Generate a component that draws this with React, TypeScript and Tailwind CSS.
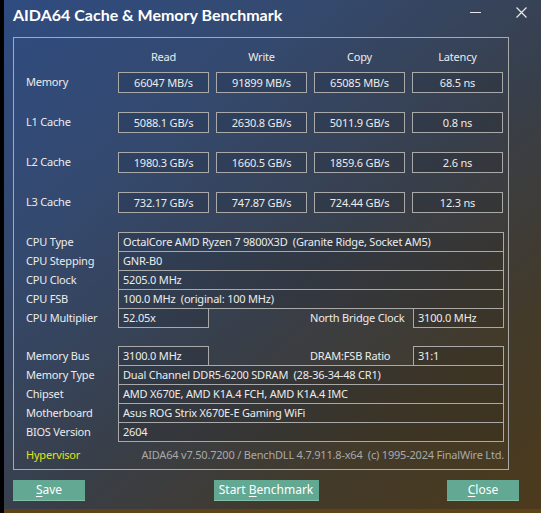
import React from "react";

const font = { fontFamily: '"Noto Sans", "Liberation Sans", sans-serif' };
const titleFont = { fontFamily: 'Lato, "Noto Sans", sans-serif' };

const results = [
  { label: "Memory", values: ["66047 MB/s", "91899 MB/s", "65085 MB/s", "68.5 ns"] },
  { label: "L1 Cache", values: ["5088.1 GB/s", "2630.8 GB/s", "5011.9 GB/s", "0.8 ns"] },
  { label: "L2 Cache", values: ["1980.3 GB/s", "1660.5 GB/s", "1859.6 GB/s", "2.6 ns"] },
  { label: "L3 Cache", values: ["732.17 GB/s", "747.87 GB/s", "724.44 GB/s", "12.3 ns"] },
];

const box = "border border-[#a9a9a9] bg-black/10 pl-[4px] leading-[18px] whitespace-pre";

function WideRow({ label, value, first }: { label: string; value: string; first?: boolean }) {
  return (
    <div className={`flex h-[20px] ${first ? "" : "-mt-px"}`}>
      <div className="w-[104px] pl-[12px] leading-[20px]">{label}</div>
      <div className={`w-[386px] ${box}`}>{value}</div>
    </div>
  );
}

function SplitRow({ label, value, label2, value2, first }: { label: string; value: string; label2: string; value2: string; first?: boolean }) {
  return (
    <div className={`flex h-[20px] ${first ? "" : "-mt-px"}`}>
      <div className="w-[104px] pl-[12px] leading-[20px]">{label}</div>
      <div className={`w-[91px] ${box}`}>{value}</div>
      <div className="w-[204px] pl-[101px] leading-[20px]">{label2}</div>
      <div className={`w-[91px] ${box}`}>{value2}</div>
    </div>
  );
}

export default function App() {
  return (
    <div
      className="relative flex h-[513px] w-[541px] flex-col overflow-hidden border-l-4 border-black bg-[linear-gradient(140deg,#2f4c80_0%,#34496e_28%,#383f4a_55%,#433a2a_78%,#4c3a1c_100%)] text-[11px] tracking-[-0.2px] text-[#ececec]"
      style={font}
    >
      {/* Title bar */}
      <div className="flex h-[37px] items-start">
        <div className="pl-[9px] pt-[4px] text-[16px] font-bold leading-[22px] tracking-normal text-white" style={titleFont}>
          AIDA64 Cache &amp; Memory Benchmark
        </div>
        <div className="ml-auto flex items-start">
          <svg className="mt-[12px] mr-[35px]" width="11" height="2" viewBox="0 0 11 2">
            <rect x="0" y="0" width="11" height="1" fill="#e8e8e8" />
          </svg>
          <svg className="mt-[7px] mr-[14px]" width="11" height="11" viewBox="0 0 11 11">
            <path d="M0.5 0.5 L10.5 10.5 M10.5 0.5 L0.5 10.5" stroke="#e8e8e8" strokeWidth="1.2" />
          </svg>
        </div>
      </div>

      {/* Panel */}
      <div className="ml-[9px] w-[496px] border border-[#a9a9a9] pt-[10px]">
        <div className="flex h-[18px] items-center">
          <div className="w-[104px]" />
          <div className="grid grid-cols-[91px_91px_91px_91px] gap-x-[7px] text-center">
            <div>Read</div>
            <div>Write</div>
            <div>Copy</div>
            <div>Latency</div>
          </div>
        </div>
        <div className="mt-[6px] flex flex-col gap-[19px]">
          {results.map((r) => (
            <div key={r.label} className="flex h-[21px] items-center">
              <div className="w-[104px] pl-[12px]">{r.label}</div>
              <div className="grid grid-cols-[91px_91px_91px_91px] gap-x-[7px]">
                {r.values.map((v) => (
                  <div key={v} className="h-[21px] border border-[#a9a9a9] bg-black/10 text-center leading-[19px]">
                    {v}
                  </div>
                ))}
              </div>
            </div>
          ))}
        </div>

        <div className="mt-[19px] flex flex-col">
          <WideRow first label="CPU Type" value="OctalCore AMD Ryzen 7 9800X3D  (Granite Ridge, Socket AM5)" />
          <WideRow label="CPU Stepping" value="GNR-B0" />
          <WideRow label="CPU Clock" value="5205.0 MHz" />
          <WideRow label="CPU FSB" value="100.0 MHz  (original: 100 MHz)" />
          <SplitRow label="CPU Multiplier" value="52.05x" label2="North Bridge Clock" value2="3100.0 MHz" />
        </div>

        <div className="mt-[18px] flex flex-col">
          <SplitRow first label="Memory Bus" value="3100.0 MHz" label2="DRAM:FSB Ratio" value2="31:1" />
          <WideRow label="Memory Type" value="Dual Channel DDR5-6200 SDRAM  (28-36-34-48 CR1)" />
          <WideRow label="Chipset" value="AMD X670E, AMD K1A.4 FCH, AMD K1A.4 IMC" />
          <WideRow label="Motherboard" value="Asus ROG Strix X670E-E Gaming WiFi" />
          <WideRow label="BIOS Version" value="2604" />
        </div>

        <div className="flex h-[27px] items-center pb-[1px] pl-[12px] pr-[4px]">
          <span className="text-[#dfe31a]">Hypervisor</span>
          <span className="ml-auto whitespace-pre text-[#a9a9a9]">AIDA64 v7.50.7200 / BenchDLL 4.7.911.8-x64  (c) 1995-2024 FinalWire Ltd.</span>
        </div>
      </div>

      {/* Buttons */}
      <div className="ml-[9px] mt-[10px] flex w-[506px] justify-between text-[12px] tracking-normal">
        <button className="h-[21px] w-[72px] border-b border-[#82c0a8] bg-[#62a893] text-center leading-[20px] text-white">
          <span className="underline underline-offset-2">S</span>ave
        </button>
        <button className="h-[21px] w-[105px] border-b border-[#82c0a8] bg-[#62a893] text-center leading-[20px] text-white">
          Start <span className="underline underline-offset-2">B</span>enchmark
        </button>
        <button className="h-[21px] w-[72px] border-b border-[#82c0a8] bg-[#62a893] text-center leading-[20px] text-white">
          <span className="underline underline-offset-2">C</span>lose
        </button>
      </div>

      <div className="absolute bottom-0 left-0 h-[4px] w-full bg-[#5e4418]" />
    </div>
  );
}
